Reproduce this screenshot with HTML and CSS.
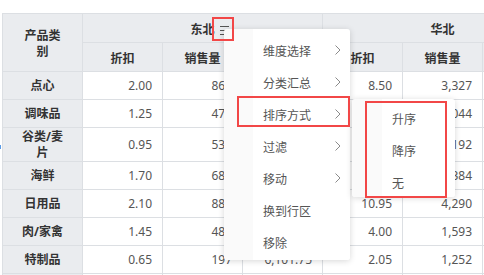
FILE: index.html
```html
<!DOCTYPE html>
<html lang="zh">
<head>
<meta charset="utf-8">
<title>Pivot</title>
<link rel="stylesheet" href="styles.css">
</head>
<body>
<div class="page">
  <table class="pivot">
    <colgroup>
      <col class="c"><col class="c"><col class="c"><col class="c"><col class="c"><col class="c"><col class="c">
    </colgroup>
    <thead>
      <tr class="hr">
        <th rowspan="2" class="corner">产品类别</th>
        <th colspan="3"><span class="gtitle">东北<svg class="hamb" width="9" height="11" viewBox="0 0 9 11"><path d="M0 1.5H9M0 5.5H9M0 9.5H9" stroke="#555" stroke-width="1" fill="none"/></svg></span></th>
        <th colspan="3">华北</th>
      </tr>
      <tr class="hr">
        <th>折扣</th><th>销售量</th><th>销售额</th><th>折扣</th><th>销售量</th><th>销售额</th>
      </tr>
    </thead>
    <tbody>
      <tr><th class="rh">点心</th><td>2.00</td><td>862</td><td>1,724.00</td><td>8.50</td><td>3,327</td><td>28,279.50</td></tr>
      <tr><th class="rh">调味品</th><td>1.25</td><td>470</td><td>587.50</td><td>3.20</td><td>2,044</td><td>6,540.80</td></tr>
      <tr><th class="rh">谷类/麦片</th><td>0.95</td><td>538</td><td>511.10</td><td>2.40</td><td>1,192</td><td>2,860.80</td></tr>
      <tr><th class="rh">海鲜</th><td>1.70</td><td>684</td><td>1,162.80</td><td>5.60</td><td>2,384</td><td>13,350.40</td></tr>
      <tr><th class="rh">日用品</th><td>2.10</td><td>889</td><td>1,866.90</td><td>10.95</td><td>4,290</td><td>46,975.50</td></tr>
      <tr><th class="rh">肉/家禽</th><td>1.45</td><td>485</td><td>703.25</td><td>4.00</td><td>1,593</td><td>6,372.00</td></tr>
      <tr><th class="rh">特制品</th><td>0.65</td><td>197</td><td>6,101.75</td><td>2.05</td><td>1,252</td><td>2,566.60</td></tr>
      <tr><th class="rh">饮料</th><td>1.10</td><td>356</td><td>391.60</td><td>3.15</td><td>2,117</td><td>6,668.55</td></tr>
    </tbody>
  </table>

  <div class="menu">
    <div class="mi"><span>维度选择</span><svg class="chev" width="6" height="10" viewBox="0 0 6 10"><path d="M0.5 0.5L5 5L0.5 9.5" stroke="#8a8a8a" stroke-width="1" fill="none"/></svg></div>
    <div class="mi"><span>分类汇总</span><svg class="chev" width="6" height="10" viewBox="0 0 6 10"><path d="M0.5 0.5L5 5L0.5 9.5" stroke="#8a8a8a" stroke-width="1" fill="none"/></svg></div>
    <div class="mi"><span>排序方式</span><svg class="chev" width="6" height="10" viewBox="0 0 6 10"><path d="M0.5 0.5L5 5L0.5 9.5" stroke="#8a8a8a" stroke-width="1" fill="none"/></svg></div>
    <div class="mi"><span>过滤</span><svg class="chev" width="6" height="10" viewBox="0 0 6 10"><path d="M0.5 0.5L5 5L0.5 9.5" stroke="#8a8a8a" stroke-width="1" fill="none"/></svg></div>
    <div class="mi"><span>移动</span><svg class="chev" width="6" height="10" viewBox="0 0 6 10"><path d="M0.5 0.5L5 5L0.5 9.5" stroke="#8a8a8a" stroke-width="1" fill="none"/></svg></div>
    <div class="mi"><span>换到行区</span></div>
    <div class="mi"><span>移除</span></div>
  </div>

  <div class="submenu">
    <div class="si">升序</div>
    <div class="si">降序</div>
    <div class="si">无</div>
  </div>

  <div class="mark mark-icon"></div>
  <div class="mark mark-item"></div>
  <div class="mark mark-sub"></div>
  <div class="edge-tick"></div>
</div>
</body>
</html>
```

FILE: styles.css
```css
html, body {
  margin: 0;
  padding: 0;
  background: #ffffff;
}

.page {
  position: relative;
  width: 484px;
  height: 275px;
  overflow: hidden;
  padding: 13px 0 0 2px;
  box-sizing: border-box;
  font-family: "Noto Sans", "Noto Sans CJK SC", sans-serif;
  font-size: 12px;
  color: #333;
}

.pivot {
  border-collapse: collapse;
  table-layout: fixed;
  width: 561px;
}

.pivot col.c {
  width: 80px;
}

.pivot th,
.pivot td {
  border: 1px solid #dcdfe3;
  line-height: 16px;
  vertical-align: middle;
  box-sizing: border-box;
}

.pivot thead th {
  background: #eaecef;
  font-weight: 700;
  color: #333;
  text-align: center;
  height: 29px;
  padding: 3px 4px 0;
}

.pivot thead th.corner {
  padding: 2px 17px 0;
}

.pivot tbody th.rh {
  background: #eaecef;
  font-weight: 700;
  color: #333;
  text-align: center;
  padding: 1px 17px 0;
  height: 28px;
}

.pivot tbody td {
  background: #ffffff;
  color: #555;
  text-align: right;
  padding: 1px 10px 0;
  height: 28px;
  font-weight: 400;
}

.gtitle {
  position: relative;
  display: inline-block;
}

.hamb {
  position: absolute;
  left: 100%;
  margin-left: 5px;
  top: 3px;
}

.menu {
  position: absolute;
  left: 224px;
  top: 29px;
  width: 126px;
  height: 231px;
  box-sizing: border-box;
  padding-top: 5px;
  background: linear-gradient(90deg, #fafafa 0, #fafafa 29px, #fff 29px);
  border-radius: 3px;
  box-shadow: 0 1px 6px rgba(0, 0, 0, 0.16);
  z-index: 2;
}

.mi {
  height: 32px;
  display: flex;
  align-items: center;
  justify-content: space-between;
  padding: 0 9px 0 39px;
  color: #555;
  font-family: "Noto Sans CJK SC", sans-serif;
}

.submenu {
  position: absolute;
  left: 352px;
  top: 99px;
  width: 103px;
  height: 98px;
  box-sizing: border-box;
  padding-top: 3px;
  background: linear-gradient(90deg, #fafafa 0, #fafafa 30px, #fff 30px);
  border-radius: 3px;
  box-shadow: 0 1px 6px rgba(0, 0, 0, 0.16);
  z-index: 2;
}

.si {
  height: 32px;
  display: flex;
  align-items: center;
  padding-left: 40px;
  color: #555;
  font-family: "Noto Sans CJK SC", sans-serif;
}

.mark {
  position: absolute;
  border: 2px solid #f24747;
  box-sizing: border-box;
  z-index: 3;
}

.mark-icon {
  left: 212px;
  top: 17px;
  width: 22px;
  height: 24px;
}

.mark-item {
  left: 237px;
  top: 96px;
  width: 113px;
  height: 31px;
}

.mark-sub {
  left: 365px;
  top: 101px;
  width: 82px;
  height: 97px;
}

.edge-tick {
  position: absolute;
  left: 0;
  top: 145px;
  width: 1px;
  height: 4px;
  background: #5a9be6;
}
```
